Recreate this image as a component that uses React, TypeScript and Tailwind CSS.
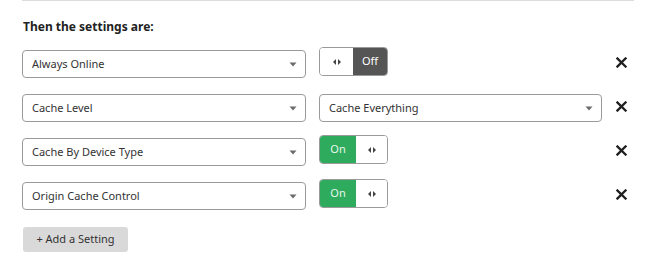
import React from 'react';

const FONT = { fontFamily: '"Noto Sans", "Open Sans", sans-serif' };

const Caret = () => (
    <svg width="8" height="5" viewBox="0 0 8 5" className="shrink-0">
        <path d="M0.5 0.5 L7.5 0.5 L4 4.5 Z" fill="#6b6b6b" />
    </svg>
);

const Arrows = () => (
    <svg width="8" height="6" viewBox="0 0 8 6">
        <path d="M3 0 L0 3 L3 6 Z" fill="#444" />
        <path d="M5 0 L8 3 L5 6 Z" fill="#444" />
    </svg>
);

const CloseIcon = () => (
    <svg width="11" height="11" viewBox="0 0 11 11">
        <path d="M1.5 1.5 L9.5 9.5 M9.5 1.5 L1.5 9.5" stroke="#1f1f1f" strokeWidth="2.3" strokeLinecap="square" />
    </svg>
);

const Select = ({ label, width }: { label: string; width: string }) => (
    <div className={`${width} h-[28px] mt-[3px] flex items-center justify-between border border-[#9a9a9a] rounded-[4px] bg-white pl-[9px] pr-[8px] text-[11px] text-[#333]`}>
        <span>{label}</span>
        <Caret />
    </div>
);

const Toggle = ({ on }: { on: boolean }) => (
    <div className="w-[69px] h-[29px] flex border border-[#9a9a9a] rounded-[4px] overflow-hidden text-[11px]">
        {on ? (
            <>
                <div className="w-[36px] bg-[#2eab5c] text-[#e8f7ee] flex items-center justify-center">On</div>
                <div className="flex-1 bg-white flex items-center justify-center"><Arrows /></div>
            </>
        ) : (
            <>
                <div className="w-[33px] bg-white flex items-center justify-center"><Arrows /></div>
                <div className="flex-1 bg-[#555] text-white flex items-center justify-center">Off</div>
            </>
        )}
    </div>
);

type Row = { name: string; toggle?: boolean; value?: string };

const rows: Row[] = [
    { name: 'Always Online', toggle: false },
    { name: 'Cache Level', value: 'Cache Everything' },
    { name: 'Cache By Device Type', toggle: true },
    { name: 'Origin Cache Control', toggle: true },
];

export default function App() {
    return (
        <div className="w-[650px] h-[258px] bg-white overflow-hidden" style={FONT}>
            <div className="h-px bg-[#dcdcdc] ml-[22px] mr-[16px]" />
            <div className="ml-[23px] mt-[18px] text-[12px] leading-[16px] font-bold text-[#222]">Then the settings are:</div>
            <div className="mt-[12px] ml-[22px] flex flex-col">
                {rows.map((r) => (
                    <div key={r.name} className="h-[44px] flex items-start">
                        <Select label={r.name} width="w-[284px]" />
                        <div className="ml-[13px] w-[283px] flex">
                            {r.value ? <Select label={r.value} width="w-[283px]" /> : <Toggle on={!!r.toggle} />}
                        </div>
                        <div className="ml-[14px] h-[31px] flex items-center"><CloseIcon /></div>
                    </div>
                ))}
            </div>
            <button className="ml-[23px] mt-[4px] w-[105px] h-[25px] rounded-[3px] bg-[#d9d9d9] text-[11px] text-[#333]">+ Add a Setting</button>
        </div>
    );
}
